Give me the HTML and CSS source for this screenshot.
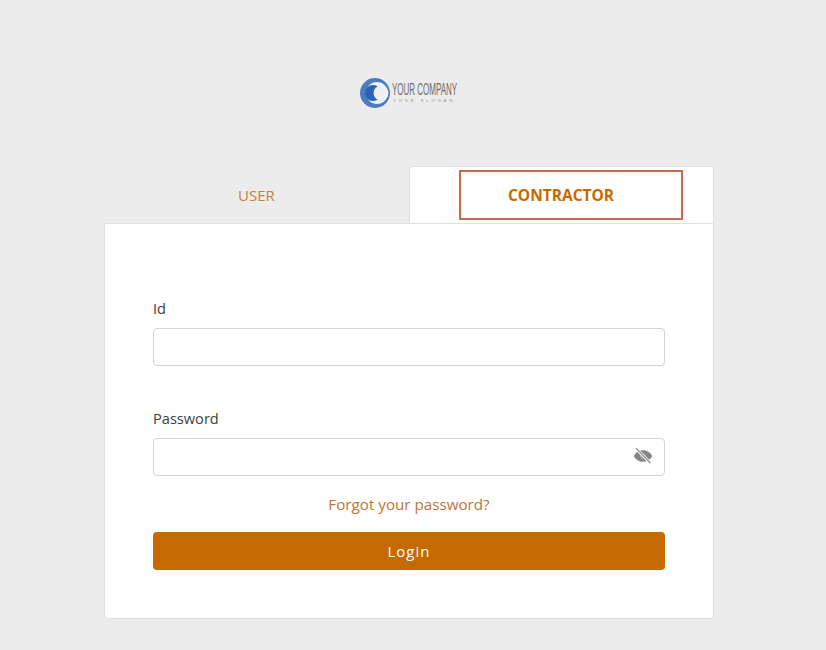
FILE: index.html
```html
<!DOCTYPE html>
<html lang="en">
<head>
  <meta charset="UTF-8">
  <title>Login</title>
  <link rel="stylesheet" href="styles.css">
</head>
<body>
  <div class="logo">
    <svg class="logo-mark" width="30" height="30" viewBox="0 0 30 30">
      <circle cx="15" cy="15" r="15" fill="#4a7cc4"/>
      <circle cx="17" cy="15" r="11" fill="#eef0f6"/>
      <circle cx="13" cy="15" r="8" fill="#2b63b8"/>
      <circle cx="21" cy="15" r="7.500" fill="#eef0f6"/>
    </svg>
    <div class="logo-text">
      <span class="logo-name">YOUR COMPANY</span>
      <span class="logo-slogan">YOUR SLOGAN</span>
    </div>
  </div>

  <div class="login-box">
    <div class="tabs">
      <div class="tab">USER</div>
      <div class="tab tab-active"><span class="tab-label">CONTRACTOR</span></div>
    </div>

    <form class="panel">
      <label class="field-label" for="userId">Id</label>
      <input class="field-input" type="text" id="userId">

      <label class="field-label field-second" for="password">Password</label>
      <div class="password-wrap">
        <input class="field-input" type="password" id="password">
        <svg class="eye" width="20" height="20" viewBox="0 0 24 24">
          <path d="M12 5C7 5 2.700 8 1 12c1.700 4 6 7 11 7s9.300-3 11-7c-1.700-4-6-7-11-7z" fill="#868686"/>
          <circle cx="12" cy="12" r="3.200" fill="#a8a8a8"/>
          <path d="M4 3.500L20.500 20" stroke="#fff" stroke-width="3.500"/>
          <path d="M3.500 2.500L21 20.500" stroke="#868686" stroke-width="1.500"/>
        </svg>
      </div>

      <a class="forgot" href="#">Forgot your password?</a>
      <button class="login-btn" type="button">Login</button>
    </form>
  </div>
</body>
</html>
```

FILE: styles.css
```css
* {
  box-sizing: border-box;
  margin: 0;
  padding: 0;
}

body {
  background: #ececec;
  font-family: "Open Sans", "Noto Sans", sans-serif;
  color: #212529;
  display: flex;
  flex-direction: column;
  align-items: center;
  padding: 78px 8px 0 0;
  height: 650px;
  overflow: hidden;
}

/* logo */
.logo {
  display: flex;
  align-items: center;
  gap: 2px;
  height: 30px;
  margin-bottom: 58px;
}

.logo-text {
  display: flex;
  flex-direction: column;
  align-items: flex-start;
  width: 66px;
  margin-top: -1px;
}

.logo-name {
  font-family: "Liberation Sans", sans-serif;
  font-size: 17px;
  line-height: 16px;
  color: #6a6a6a;
  white-space: nowrap;
  transform: scaleX(0.47);
  transform-origin: left center;
}

.logo-slogan {
  font-family: "Liberation Sans", sans-serif;
  font-size: 4px;
  line-height: 6px;
  letter-spacing: 3px;
  color: #8a8a8a;
  white-space: nowrap;
  margin-left: 1px;
}

/* tabs */
.login-box {
  width: 610px;
}

.tabs {
  display: flex;
  height: 57px;
}

.tab {
  flex: 0 0 50%;
  display: flex;
  align-items: center;
  justify-content: center;
  font-size: 15px;
  color: #c8803a;
}

.tab-active {
  background: #fff;
  border: 1px solid #e0e0e0;
  border-bottom: none;
  border-radius: 4px 4px 0 0;
  color: #c56a00;
  font-size: 15.500px;
  font-weight: 700;
  padding: 3px 30px 3px 49px;
}

.tab-label {
  flex: 1;
  height: 50px;
  border: 2px solid #c9684a;
  padding-right: 20px;
  display: flex;
  align-items: center;
  justify-content: center;
}

/* form */
.panel {
  background: #fff;
  border: 1px solid #e0e0e0;
  border-radius: 0 0 4px 4px;
  height: 396px;
  padding: 72px 48px 0;
  display: flex;
  flex-direction: column;
}

.field-label {
  font-size: 14.600px;
  line-height: 24px;
  margin-bottom: 8px;
  color: #3a3f44;
}

.field-second {
  margin-top: 40px;
}

.field-input {
  width: 100%;
  height: 38px;
  background: #fff;
  border: 1px solid #ced4da;
  border-radius: 4px;
  display: block;
}

.password-wrap {
  position: relative;
}

.eye {
  position: absolute;
  right: 12px;
  top: 8px;
}

.forgot {
  font-size: 15.200px;
  line-height: 22px;
  color: #c0733a;
  text-decoration: none;
  text-align: center;
  margin-top: 17px;
}

.login-btn {
  height: 38px;
  margin-top: 17px;
  background: #c56a00;
  color: #fff;
  border: none;
  border-radius: 4px;
  font-family: inherit;
  font-size: 15px;
  letter-spacing: 1px;
}
```
